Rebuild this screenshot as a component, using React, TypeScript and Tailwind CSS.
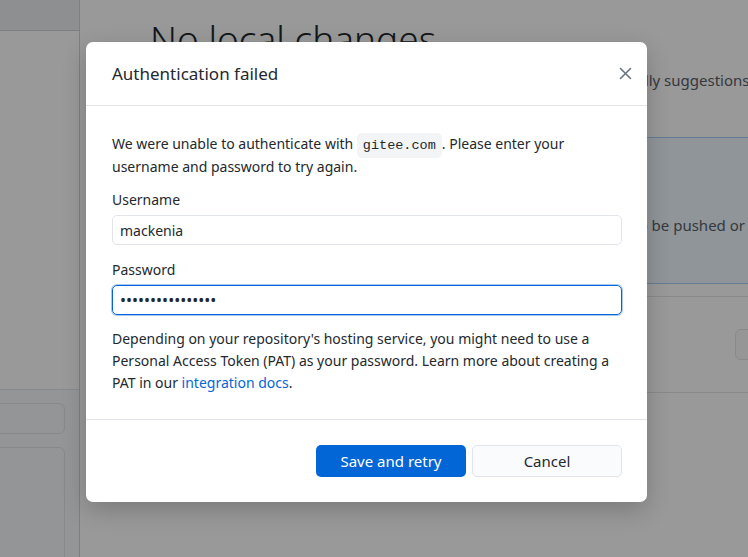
import React from "react";

const font = { fontFamily: '"Noto Sans", "Open Sans", sans-serif' };

function CloseIcon() {
  return (
    <svg width="13" height="13" viewBox="0 0 13 13" fill="none">
      <path d="M1.5 1.5L11.5 11.5M11.5 1.5L1.5 11.5" stroke="#6a737d" strokeWidth="1.6" strokeLinecap="round" />
    </svg>
  );
}

function Backdrop() {
  return (
    <div className="flex h-full w-full">
      <aside className="flex w-[80px] shrink-0 flex-col border-r border-[#d1d5da]">
        <div className="h-[31px] shrink-0 border-b border-[#d1d5da] bg-[#eceef1]" />
        <div className="flex-1 bg-white" />
        <div className="h-[168px] shrink-0 border-t border-[#e1e4e8] bg-[#f6f8fa] pr-[14px]">
          <div className="-ml-[20px] mt-[13px] h-[31px] rounded-[6px] border border-[#e1e4e8] bg-[#f6f8fa]" />
          <div className="-ml-[20px] mt-[13px] h-[130px] rounded-[6px] border border-[#e1e4e8] bg-[#f6f8fa]" />
        </div>
      </aside>
      <main className="flex-1 overflow-hidden bg-white pl-[70px] pt-[17px]">
        <h1 className="whitespace-nowrap text-[37px] font-light leading-[44px] text-[#24292e]">No local changes</h1>
        <p className="-ml-[32px] mt-[8px] whitespace-nowrap text-[15px] leading-[22px] text-[#586069]">
          There are no uncommitted changes in this repository. Here are some friendly suggestions for what to do next.
        </p>
        <div className="mt-[46px] w-[700px]">
          <div className="flex h-[147px] justify-end rounded-l-[6px] border border-[#a8cdf7] bg-[#f1f8ff] pr-[104px] pt-[76px]">
            <p className="h-[22px] whitespace-nowrap text-[15px] leading-[22px] text-[#586069]">
              You have one local commit waiting to be pushed or
            </p>
          </div>
          <div className="mt-[12px] flex h-[97px] items-center justify-end border-t border-b border-[#e1e4e8]">
            <div className="h-[31px] w-[115px] rounded-[6px] border border-[#e1e4e8] bg-[#fafbfc]" />
          </div>
        </div>
      </main>
    </div>
  );
}

export default function App() {
  return (
    <div className="relative h-[557px] w-[748px] overflow-hidden bg-white" style={font}>
      <Backdrop />
      <div className="absolute inset-0 bg-black/40 pl-[86px] pt-[42px]">
        <div className="w-[561px] overflow-hidden rounded-[7px] bg-white shadow-[0_8px_24px_rgba(0,0,0,0.2)]">
          <header className="flex h-[64px] items-center justify-between border-b border-[#e1e4e8] pl-[26px] pr-[10px]">
            <h2 className="text-[17px] leading-none text-[#24292e]">Authentication failed</h2>
            <button className="flex h-[24px] w-[24px] items-center justify-center">
              <CloseIcon />
            </button>
          </header>
          <div className="border-b border-[#e1e4e8] pb-[25px] pl-[26px] pr-[25px] pt-[26px] text-[14px] text-[#24292e]">
            <p className="leading-[23px]">
              We were unable to authenticate with{" "}
              <code
                className="rounded-[5px] bg-[#f3f4f6] px-[6px] py-[5px] text-[13.5px] leading-none"
                style={{ fontFamily: '"Liberation Mono", monospace' }}
              >
                gitee.com
              </code>
              . Please enter your username and password to try again.
            </p>
            <label className="mt-[10px] block leading-[23px]">Username</label>
            <input
              readOnly
              value="mackenia"
              className="mt-[4px] block h-[30px] w-full rounded-[5px] border border-[#e1e4e8] px-[7px] text-[14px] text-[#24292e] outline-none"
            />
            <label className="mt-[13px] block leading-[23px]">Password</label>
            <input
              readOnly
              type="password"
              value="mackeniapass1234"
              className="mt-[4px] block h-[30px] w-full rounded-[5px] border border-[#0366d6] px-[7px] text-[16px] text-[#24292e] shadow-[0_0_0_1px_rgba(3,102,214,0.35)] outline-none"
            />
            <p className="mt-[13px] leading-[22px]">
              Depending on your repository's hosting service, you might need to use a Personal Access Token (PAT) as
              your password. Learn more about creating a PAT in our{" "}
              <a className="text-[#0366d6]" href="#">
                integration docs
              </a>
              .
            </p>
          </div>
          <footer className="flex justify-end gap-[6px] pb-[25px] pr-[25px] pt-[25px]">
            <button className="h-[32px] w-[150px] rounded-[5px] bg-[#0366d6] text-[15px] text-white">
              Save and retry
            </button>
            <button className="h-[32px] w-[150px] rounded-[5px] border border-[#e1e4e8] bg-[#fafbfc] text-[15px] text-[#24292e]">
              Cancel
            </button>
          </footer>
        </div>
      </div>
    </div>
  );
}
